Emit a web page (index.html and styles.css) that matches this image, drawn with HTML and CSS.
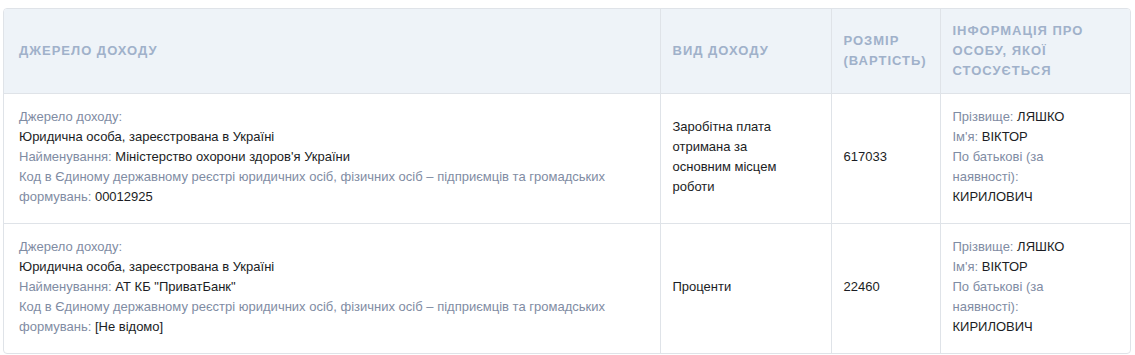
FILE: index.html
```html
<!DOCTYPE html>
<html lang="uk">
<head>
<meta charset="utf-8">
<link rel="stylesheet" href="styles.css">
</head>
<body>
<div class="card">
  <table class="income">
    <colgroup>
      <col class="c-src">
      <col class="c-type">
      <col class="c-size">
      <col class="c-person">
    </colgroup>
    <thead>
      <tr>
        <th>Джерело доходу</th>
        <th>Вид доходу</th>
        <th>Розмір (вартість)</th>
        <th class="person">Інформація про особу, якої стосується</th>
      </tr>
    </thead>
    <tbody>
      <tr>
        <td>
          <div><span class="lbl">Джерело доходу:</span></div>
          <div>Юридична особа, зареєстрована в Україні</div>
          <div><span class="lbl">Найменування:</span> Міністерство охорони здоров'я України</div>
          <div><span class="lbl">Код в Єдиному державному реєстрі юридичних осіб, фізичних осіб – підприємців та громадських формувань:</span> 00012925</div>
        </td>
        <td class="type">Заробітна плата отримана за основним місцем роботи</td>
        <td>617033</td>
        <td class="person">
          <div><span class="lbl">Прізвище:</span> ЛЯШКО</div>
          <div><span class="lbl">Ім'я:</span> ВІКТОР</div>
          <div><span class="lbl">По батькові (за наявності):</span></div>
          <div>КИРИЛОВИЧ</div>
        </td>
      </tr>
      <tr>
        <td>
          <div><span class="lbl">Джерело доходу:</span></div>
          <div>Юридична особа, зареєстрована в Україні</div>
          <div><span class="lbl">Найменування:</span> АТ КБ "ПриватБанк"</div>
          <div><span class="lbl">Код в Єдиному державному реєстрі юридичних осіб, фізичних осіб – підприємців та громадських формувань:</span> [Не відомо]</div>
        </td>
        <td class="type">Проценти</td>
        <td>22460</td>
        <td class="person">
          <div><span class="lbl">Прізвище:</span> ЛЯШКО</div>
          <div><span class="lbl">Ім'я:</span> ВІКТОР</div>
          <div><span class="lbl">По батькові (за наявності):</span></div>
          <div>КИРИЛОВИЧ</div>
        </td>
      </tr>
    </tbody>
  </table>
</div>
</body>
</html>
```

FILE: styles.css
```css
html, body {
  background: #ffffff;
}
body {
  margin: 8px 4px 0 3px;
  font-family: "Liberation Sans", Arial, sans-serif;
  font-size: 13px;
  line-height: 20px;
  color: #1b1d24;
}
.card {
  border: 1px solid #dfe3e8;
  border-radius: 4px;
  overflow: hidden;
}
.income {
  width: 100%;
  border-collapse: collapse;
  table-layout: fixed;
}
.c-src { width: 656px; }
.c-type { width: 171px; }
.c-size { width: 109px; }
.c-person { width: auto; }

.income th,
.income td {
  border-left: 1px solid #dfe3e8;
  vertical-align: middle;
  text-align: left;
}
.income th:first-child,
.income td:first-child {
  border-left: none;
  padding-left: 15px;
}
.income th {
  background: #eef3f8;
  color: #a0b1ca;
  font-size: 13px;
  font-weight: bold;
  letter-spacing: 1px;
  text-transform: uppercase;
  padding: 12px 11px 12px 12px;
  border-bottom: 1px solid #dfe3e8;
}
.income td {
  padding: 13px 12px 16px 12px;
  border-top: 1px solid #dfe3e8;
}
.income tbody tr:first-child td {
  border-top: none;
}
.income td.type {
  padding-right: 36px;
}
.income .person {
  padding-right: 30px;
}
.lbl {
  color: #7f8ca3;
}
```
